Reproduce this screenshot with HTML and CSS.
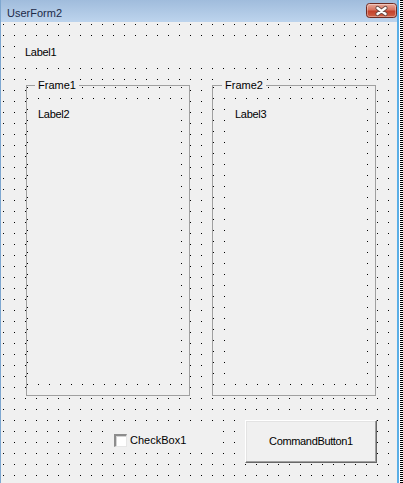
FILE: index.html
```html
<!DOCTYPE html>
<html>
<head>
<meta charset="utf-8">
<link rel="stylesheet" href="styles.css">
</head>
<body>
<div class="screen">
  <div class="window">
    <div class="titlebar">
      <span class="title">UserForm2</span>
      <svg class="close" width="31" height="15" viewBox="0 0 31 15">
        <defs>
          <linearGradient id="cg" x1="0" y1="0" x2="0" y2="1">
            <stop offset="0" stop-color="#eab0a2"/>
            <stop offset="0.45" stop-color="#d7735f"/>
            <stop offset="0.55" stop-color="#c3412b"/>
            <stop offset="1" stop-color="#cf6448"/>
          </linearGradient>
        </defs>
        <rect x="0.5" y="0.5" width="30" height="14" rx="3" fill="url(#cg)" stroke="#6e2b22"/>
        <rect x="1.5" y="1.5" width="28" height="12" rx="2" fill="none" stroke="rgba(255,255,255,0.35)"/>
        <path d="M11.5 5 L19.5 11 M19.5 5 L11.5 11" stroke="#6b4a45" stroke-width="4.2" stroke-linecap="round"/>
        <path d="M11.5 5 L19.5 11 M19.5 5 L11.5 11" stroke="#ffffff" stroke-width="2.4" stroke-linecap="round"/>
      </svg>
    </div>
    <div class="client">
      <div class="label label1">Label1</div>
      <div class="frames">
        <div class="frame">
          <span class="frame-caption caption1">Frame1</span>
          <div class="label label2">Label2</div>
        </div>
        <div class="frame">
          <span class="frame-caption caption2">Frame2</span>
          <div class="label label3">Label3</div>
        </div>
      </div>
      <div class="bottom-row">
        <div class="checkbox">
          <span class="check-box"></span>
          <span class="check-text">CheckBox1</span>
        </div>
        <div class="button">CommandButton1</div>
      </div>
    </div>
  </div>
  <div class="hatch"></div>
</div>
</body>
</html>
```

FILE: styles.css
```css
html, body {
  margin: 0;
  padding: 0;
  background: #f0f0f0;
}

body {
  font-family: "Liberation Sans", Arial, sans-serif;
  font-size: 11px;
  line-height: 13px;
  color: #000;
}

.screen {
  display: flex;
  width: 403px;
  height: 483px;
  overflow: hidden;
}

.window {
  width: 399px;
  height: 483px;
  box-sizing: border-box;
  border-left: 1px solid #7ea7d0;
  border-right: 2px solid #5aaee6;
  display: flex;
  flex-direction: column;
}

.titlebar {
  height: 22px;
  flex: none;
  display: flex;
  justify-content: space-between;
  align-items: flex-start;
  background: linear-gradient(to bottom, #a0bcdc, #bdd4ed);
}

.title {
  padding: 7px 0 0 6px;
  font-size: 11px;
  line-height: 13px;
  color: #1c2a48;
}

.close {
  display: block;
  margin-top: 3px;
}

.client {
  flex: 1;
  background-color: #000;
  background-image:
    linear-gradient(to right, transparent 1px, #f0f0f0 1px),
    linear-gradient(to bottom, transparent 1px, #f0f0f0 1px);
  background-size: 11px 11px;
  background-position: 2px 2px;
  overflow: hidden;
}

.label {
  box-sizing: border-box;
  background: #f0f0f0;
  padding: 5px 0 0 5px;
  letter-spacing: -0.3px;
}

.label1 {
  margin: 19px 0 0 19px;
  width: 330px;
  height: 22px;
}

.frames {
  display: flex;
  gap: 22px;
  margin: 22px 0 0 25px;
}

.frame {
  position: relative;
  box-sizing: border-box;
  width: 164px;
  height: 311px;
  border: 1px solid #a0a0a0;
  background-color: #000;
  background-image:
    linear-gradient(to right, transparent 1px, #f0f0f0 1px),
    linear-gradient(to bottom, transparent 1px, #f0f0f0 1px);
  background-size: 11px 11px;
  background-position: 0 1px;
  overflow: visible;
}

.frame-caption {
  position: absolute;
  top: -7px;
  padding: 0 3px;
  background: #f0f0f0;
  line-height: 13px;
}

.caption1 {
  left: 8px;
}

.caption2 {
  left: 9px;
}

.label2 {
  margin: 17px 0 0 6px;
  width: 143px;
  height: 275px;
}

.label3 {
  margin: 17px 0 0 17px;
  width: 132px;
  height: 275px;
}

.bottom-row {
  display: flex;
  align-items: flex-start;
  margin-top: 24px;
  padding-left: 107px;
}

.checkbox {
  box-sizing: border-box;
  width: 110px;
  height: 23px;
  margin-top: 9px;
  display: flex;
  align-items: center;
  background: #f0f0f0;
}

.check-box {
  box-sizing: border-box;
  width: 13px;
  height: 13px;
  margin-left: 6px;
  background: #fff;
  border-style: solid;
  border-width: 2px 1px 1px 2px;
  border-color: #8c8c8c #e6e6e6 #e6e6e6 #8c8c8c;
  box-shadow: inset 1px 1px 0 #d4d4d4;
}

.check-text {
  margin-left: 3px;
  line-height: 13px;
}

.button {
  box-sizing: border-box;
  width: 132px;
  height: 43px;
  margin-left: 27px;
  display: flex;
  align-items: center;
  justify-content: center;
  background: #f0f0f0;
  border-style: solid;
  border-width: 1px 1px 1px 1px;
  border-color: #ffffff #696969 #696969 #ffffff;
  box-shadow: inset -1px -1px 0 #a0a0a0, inset 1px 1px 0 #e3e3e3;
  letter-spacing: -0.35px;
}

.hatch {
  width: 4px;
  height: 483px;
  background-color: #fff;
  background-image:
    repeating-linear-gradient(to bottom, #000 0 1px, #fff 1px 2px);
  background-size: 3px 100%;
  background-repeat: no-repeat;
  background-position: 1px 0;
}
```
